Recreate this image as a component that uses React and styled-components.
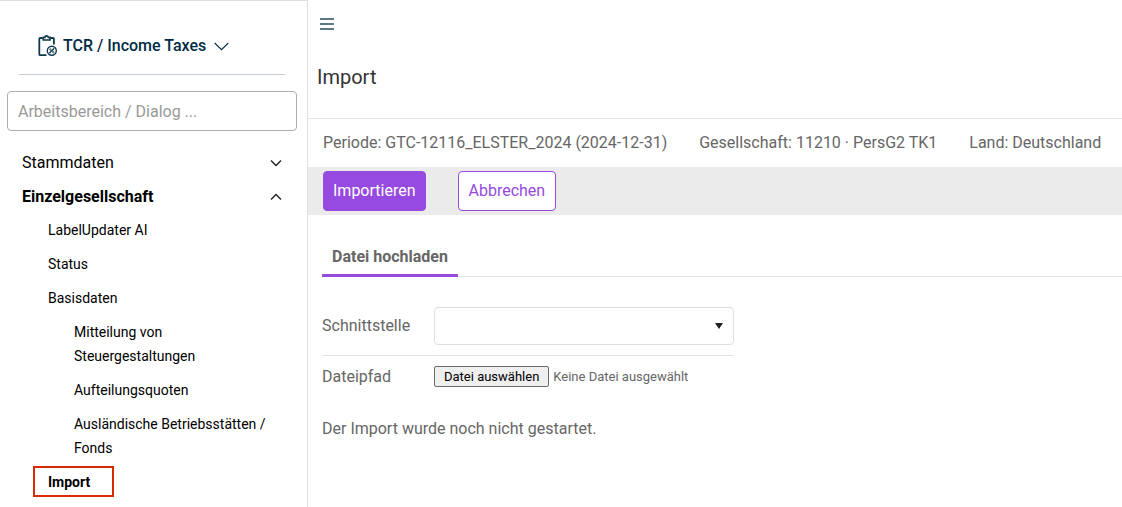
import React from "react";
import styled, { createGlobalStyle, css } from "styled-components";

const GlobalStyle = createGlobalStyle`
  *, *::before, *::after { box-sizing: border-box; }
  body {
    margin: 0;
    background: #fff;
    color: #666;
    font-family: Roboto, "Liberation Sans", sans-serif;
    font-size: 16px;
    line-height: 24px;
  }
  button, input, select { font: inherit; }
`;

const Page = styled.div`
  display: flex;
  min-height: 100vh;
`;

const Sidebar = styled.aside`
  flex: 0 0 308px;
  border-top: 1px solid #e0e0e0;
  border-right: 1px solid #e0e0e0;
  color: #000;
`;

const ModuleHeader = styled.div`
  margin: 0 22px 16px 19px;
  padding: 33px 0 16px 18px;
  border-bottom: 1px solid #c1ccd6;
`;

const ModuleButton = styled.button`
  display: flex;
  align-items: center;
  padding: 0;
  border: 0;
  background: none;
  color: #002b45;
  font-weight: 500;
  cursor: pointer;
`;

const ModuleName = styled.span`
  margin: 0 8px 0 6px;
`;

const SearchBox = styled.input`
  display: block;
  width: calc(100% - 17px);
  height: 40px;
  margin: 0 10px 14px 7px;
  padding: 0 10px;
  border: 1px solid #adadad;
  border-radius: 4px;
  background: #fff;
  &::placeholder { color: #999; opacity: 1; }
`;

const NavGroup = styled.button`
  display: flex;
  align-items: center;
  justify-content: space-between;
  width: 100%;
  padding: 6px 24px 4px 22px;
  border: 0;
  background: none;
  color: #000;
  font-weight: ${(p) => (p.$open ? 700 : 400)};
  cursor: pointer;
`;

const NavList = styled.ul`
  margin: 0;
  padding: 0;
  list-style: none;
`;

const NavLink = styled.a`
  position: relative;
  display: block;
  padding: 5px 38px 5px ${(p) => (p.$level === 2 ? 74 : 48)}px;
  color: #000;
  font-size: 14px;
  text-decoration: none;
  ${(p) =>
    p.$active &&
    css`
      font-weight: 700;
      &::after {
        content: "";
        position: absolute;
        top: 1px;
        left: 33px;
        width: 81px;
        height: 31px;
        border: 2px solid #d82c00;
      }
    `}
`;

const Main = styled.main`
  flex: 1;
  min-width: 0;
`;

const TopBar = styled.header`
  padding: 18px 10px;
`;

const MenuButton = styled.button`
  display: flex;
  padding: 0 2px;
  border: 0;
  background: none;
  color: #5f7888;
  cursor: pointer;
`;

const Title = styled.h1`
  margin: 0;
  padding: 17px 9px 29px;
  border-bottom: 1px solid #e3e3e3;
  color: #333;
  font-size: 20px;
  font-weight: 400;
  line-height: 24px;
`;

const ContextBar = styled.div`
  display: flex;
  flex-wrap: wrap;
  column-gap: 32px;
  padding: 12px 15px;
`;

const ActionBar = styled.div`
  display: flex;
  gap: 32px;
  padding: 4px 15px;
  background: #ebebeb;
`;

const ActionButton = styled.button`
  height: 40px;
  padding: 0 ${(p) => (p.$primary ? 9 : 10)}px;
  border: 1px solid #964adf;
  border-radius: 4px;
  background: ${(p) => (p.$primary ? "#964adf" : "#fff")};
  color: ${(p) => (p.$primary ? "#fff" : "#964adf")};
  cursor: pointer;
`;

const TabStrip = styled.div`
  display: flex;
  margin: 22px 0 30px 14px;
  box-shadow: inset 0 -1px #e3e3e3;
`;

const Tab = styled.button`
  height: 40px;
  padding: 2px 10px 0;
  border: 0;
  border-bottom: 3px solid #964adf;
  background: none;
  color: #666;
  font-weight: 700;
  cursor: pointer;
`;

const Form = styled.form`
  width: 426px;
  max-width: 100%;
  padding-left: 14px;
`;

const FormRow = styled.div`
  display: flex;
  align-items: center;
  padding-bottom: ${(p) => (p.$divided ? 10 : 0)}px;
  border-bottom: ${(p) => (p.$divided ? "1px solid #e3e3e3" : "0")};
  & + & { padding-top: 9px; }
`;

const FieldLabel = styled.label`
  flex: 0 0 112px;
`;

const SelectWrap = styled.div`
  position: relative;
  flex: 1;
`;

const Select = styled.select`
  display: block;
  width: 100%;
  height: 38px;
  padding: 0 32px 0 10px;
  border: 1px solid #e0e0e0;
  border-radius: 4px;
  background: #fff;
  color: #333;
  appearance: none;
`;

const SelectArrow = styled.svg`
  position: absolute;
  top: 16px;
  right: 11px;
  pointer-events: none;
`;

const FilePicker = styled.div`
  position: relative;
  display: flex;
  align-items: center;
  gap: 4px;
  padding-bottom: 1px;
  font-size: 13px;
  line-height: 17px;
`;

const FileInput = styled.input`
  position: absolute;
  width: 1px;
  height: 1px;
  opacity: 0;
`;

const FileButton = styled.label`
  padding: 1px 9px;
  border: 1px solid #6b6b6b;
  border-radius: 2px;
  background: #efefef;
  color: #000;
  white-space: nowrap;
`;

const Status = styled.p`
  margin: 0;
  padding: 28px 14px;
`;

const Chevron = ({ up }) => (
  <svg width="14" height="8" viewBox="0 0 14 8" fill="none" stroke="#222" strokeWidth="1.4" aria-hidden="true">
    <path d={up ? "M2 6.5 7 1.5l5 5" : "M2 1.5l5 5 5-5"} />
  </svg>
);

const ClipboardIcon = () => (
  <svg width="20" height="22" viewBox="-0.5 0 20 22" fill="none" stroke="#12384f" aria-hidden="true">
    <path d="M9 20.2H2.8Q1.800 20.200 1.800 19.200V4q0-1 1-1H5M13 3h2.400q1 0 1 1V9.500" strokeWidth="1.800" />
    <path d="M5.700 5V2.300h1.700Q7.700.9 9.100.9t1.700 1.400h1.700V5z" strokeWidth="1.700" />
    <circle cx="14.300" cy="15.800" r="4.500" strokeWidth="1.400" />
    <path d="m11.800 18.300 5-5" strokeWidth="1.300" />
    <circle cx="12.900" cy="14.500" r=".8" strokeWidth=".8" />
    <circle cx="15.800" cy="17.200" r=".8" strokeWidth=".8" />
  </svg>
);

const links = [
  { text: "LabelUpdater AI", level: 1 },
  { text: "Status", level: 1 },
  { text: "Basisdaten", level: 1 },
  { text: "Mitteilung von Steuergestaltungen", level: 2 },
  { text: "Aufteilungsquoten", level: 2 },
  { text: "Ausländische Betriebsstätten / Fonds", level: 2 },
  { text: "Import", level: 1, active: true },
];

export default function App() {
  return (
    <>
      <GlobalStyle />
      <Page>
        <Sidebar>
          <ModuleHeader>
            <ModuleButton type="button">
              <ClipboardIcon />
              <ModuleName>TCR / Income Taxes</ModuleName>
              <svg width="15" height="9" viewBox="0 0 15 9" fill="none" stroke="currentColor" strokeWidth="1.1" aria-hidden="true">
                <path d="M.7 1l6.800 6.700L14.300 1" />
              </svg>
            </ModuleButton>
          </ModuleHeader>
          <SearchBox type="text" placeholder="Arbeitsbereich / Dialog ..." aria-label="Arbeitsbereich / Dialog" />
          <nav>
            <NavGroup type="button" aria-expanded="false">
              Stammdaten
              <Chevron />
            </NavGroup>
            <NavGroup type="button" aria-expanded="true" $open>
              Einzelgesellschaft
              <Chevron up />
            </NavGroup>
            <NavList>
              {links.map((l) => (
                <li key={l.text}>
                  <NavLink href="#" $level={l.level} $active={l.active} aria-current={l.active ? "page" : undefined}>
                    {l.text}
                  </NavLink>
                </li>
              ))}
            </NavList>
          </nav>
        </Sidebar>
        <Main>
          <TopBar>
            <MenuButton type="button" aria-label="Menü">
              <svg width="14" height="12" viewBox="0 0 14 12" fill="currentColor" aria-hidden="true">
                <path d="M0 0h14v2H0zM0 5h14v2H0zM0 10h14v2H0z" />
              </svg>
            </MenuButton>
          </TopBar>
          <Title>Import</Title>
          <ContextBar>
            <span>Periode: GTC-12116_ELSTER_2024 (2024-12-31)</span>
            <span>Gesellschaft: 11210 · PersG2 TK1</span>
            <span>Land: Deutschland</span>
          </ContextBar>
          <ActionBar>
            <ActionButton type="button" $primary>Importieren</ActionButton>
            <ActionButton type="button">Abbrechen</ActionButton>
          </ActionBar>
          <TabStrip role="tablist">
            <Tab type="button" role="tab" aria-selected="true">Datei hochladen</Tab>
          </TabStrip>
          <Form>
            <FormRow $divided>
              <FieldLabel htmlFor="interface">Schnittstelle</FieldLabel>
              <SelectWrap>
                <Select id="interface" defaultValue="">
                  <option value=""></option>
                </Select>
                <SelectArrow width="8" height="6" viewBox="0 0 8 6" fill="#222" aria-hidden="true">
                  <path d="M0 0h8L4 6z" />
                </SelectArrow>
              </SelectWrap>
            </FormRow>
            <FormRow>
              <FieldLabel htmlFor="file">Dateipfad</FieldLabel>
              <FilePicker>
                <FileInput id="file" type="file" />
                <FileButton htmlFor="file">Datei auswählen</FileButton>
                <span>Keine Datei ausgewählt</span>
              </FilePicker>
            </FormRow>
          </Form>
          <Status>Der Import wurde noch nicht gestartet.</Status>
        </Main>
      </Page>
    </>
  );
}
